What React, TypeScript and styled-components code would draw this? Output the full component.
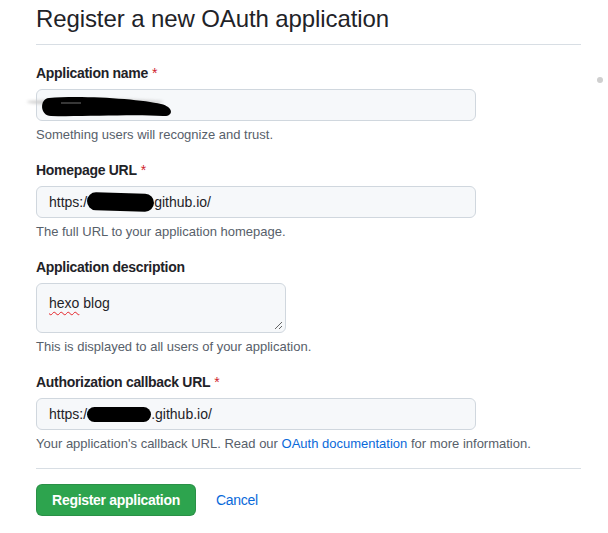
import React from "react";
import styled, { createGlobalStyle } from "styled-components";

const GlobalStyle = createGlobalStyle`
  html, body { margin: 0; padding: 0; background: #ffffff; }
  body {
    font-family: "Liberation Sans", Arial, sans-serif;
    color: #1f2328;
    -webkit-font-smoothing: antialiased;
  }
`;

const Page = styled.div`
  position: relative;
  width: 608px;
  height: 533px;
  padding: 2px 0 0 36px;
  box-sizing: border-box;
`;

const Main = styled.div`
  width: 545px;
`;

const Subhead = styled.h2`
  margin: 0;
  padding-bottom: 8px;
  border-bottom: 1px solid #d8dee4;
  font-size: 24px;
  line-height: 34px;
  font-weight: 400;
  color: #1f2328;
  letter-spacing: -0.1px;
`;

const Form = styled.form`
  display: flex;
  flex-direction: column;
  gap: 16px;
  padding-top: 18px;
`;

const Group = styled.div`
  display: flex;
  flex-direction: column;
`;

const Label = styled.label`
  font-size: 14px;
  line-height: 20px;
  font-weight: 700;
  letter-spacing: -0.3px;
  color: #1f2328;
  margin-bottom: 6px;
`;

const Required = styled.span`
  color: #cf222e;
  font-weight: 400;
  margin-left: 4px;
`;

const Field = styled.div<{ $width?: number; $height?: number; $multiline?: boolean }>`
  position: relative;
  box-sizing: border-box;
  width: ${(p) => p.$width ?? 440}px;
  height: ${(p) => p.$height ?? 32}px;
  display: flex;
  align-items: ${(p) => (p.$multiline ? "flex-start" : "center")};
  padding: ${(p) => (p.$multiline ? "9px 12px" : "0 12px")};
  background: #f6f8fa;
  border: 1px solid #d0d7de;
  border-radius: 6px;
  font-size: 14px;
  line-height: 20px;
  color: #1f2328;
  white-space: nowrap;
`;

const Redaction = styled.span<{ $w: number; $h: number; $tilt?: number }>`
  display: inline-block;
  width: ${(p) => p.$w}px;
  height: ${(p) => p.$h}px;
  background: #000;
  border-radius: ${(p) => p.$h / 2}px;
  transform: rotate(${(p) => p.$tilt ?? 0}deg);
`;

const Smudge = styled.svg`
  position: absolute;
  left: -16px;
  top: 3px;
  width: 160px;
  height: 28px;
  overflow: visible;
`;

const Misspelled = styled.span`
  text-decoration: underline wavy #e5252a;
  text-decoration-thickness: 1px;
  text-underline-offset: 3px;
`;

const Grip = styled.svg`
  position: absolute;
  right: 2px;
  bottom: 2px;
  width: 9px;
  height: 9px;
`;

const Note = styled.p`
  margin: 5px 0 0;
  font-size: 13px;
  line-height: 18px;
  color: #57606a;
`;

const Link = styled.a`
  color: #0969da;
  text-decoration: none;
`;

const Footer = styled.div`
  margin-top: -1px;
  border-top: 1px solid #d8dee4;
  padding-top: 15px;
  display: flex;
  align-items: center;
  gap: 20px;
`;

const PrimaryButton = styled.button`
  box-sizing: border-box;
  width: 160px;
  height: 32px;
  padding: 0;
  background: #2da44e;
  border: 1px solid rgba(27, 31, 36, 0.15);
  border-radius: 6px;
  color: #ffffff;
  font-family: inherit;
  font-size: 14px;
  font-weight: 700;
  letter-spacing: -0.3px;
`;

const CancelLink = styled.a`
  color: #0969da;
  font-size: 14px;
  letter-spacing: -0.3px;
  text-decoration: none;
`;

const Speck = styled.span`
  position: absolute;
  left: 597px;
  top: 77px;
  width: 6px;
  height: 6px;
  border-radius: 50%;
  background: #cfcfcf;
  filter: blur(0.6px);
`;

export default function App() {
  return (
    <Page>
      <GlobalStyle />
      <Main>
        <Subhead>Register a new OAuth application</Subhead>
        <Form onSubmit={(e) => e.preventDefault()}>
          <Group>
            <Label>
              Application name<Required>*</Required>
            </Label>
            <Field>
              <Smudge viewBox="0 0 160 28">
                <ellipse cx="74" cy="9" rx="68" ry="3" fill="#cccccc" style={{ filter: "blur(1.6px)" }} />
                <path
                  d="M28 5 C60 2,120 6,140 11 C153 14,153 24,142 23 C110 21,60 24,30 23 C19 23,18 6,28 5 Z"
                  fill="#000"
                />
                <line x1="40" y1="10" x2="60" y2="10" stroke="#8a8a8a" strokeWidth="0.8" />
              </Smudge>
            </Field>
            <Note>Something users will recognize and trust.</Note>
          </Group>

          <Group>
            <Label>
              Homepage URL<Required>*</Required>
            </Label>
            <Field>
              https:/
              <Redaction $w={67} $h={18} $tilt={1.5} />
              github.io/
            </Field>
            <Note>The full URL to your application homepage.</Note>
          </Group>

          <Group>
            <Label>Application description</Label>
            <Field $width={250} $height={50} $multiline>
              <span>
                <Misspelled>hexo</Misspelled> blog
              </span>
              <Grip viewBox="0 0 9 9">
                <line x1="8" y1="1" x2="1" y2="8" stroke="#555" strokeWidth="0.9" />
                <line x1="8" y1="5" x2="5" y2="8" stroke="#555" strokeWidth="0.9" />
              </Grip>
            </Field>
            <Note>This is displayed to all users of your application.</Note>
          </Group>

          <Group>
            <Label>
              Authorization callback URL<Required>*</Required>
            </Label>
            <Field>
              https:/
              <Redaction $w={64} $h={15} />
              .github.io/
            </Field>
            <Note>
              Your application's callback URL. Read our <Link href="#">OAuth documentation</Link> for more
              information.
            </Note>
          </Group>

          <Footer>
            <PrimaryButton type="submit">Register application</PrimaryButton>
            <CancelLink href="#">Cancel</CancelLink>
          </Footer>
        </Form>
      </Main>
      <Speck />
    </Page>
  );
}
